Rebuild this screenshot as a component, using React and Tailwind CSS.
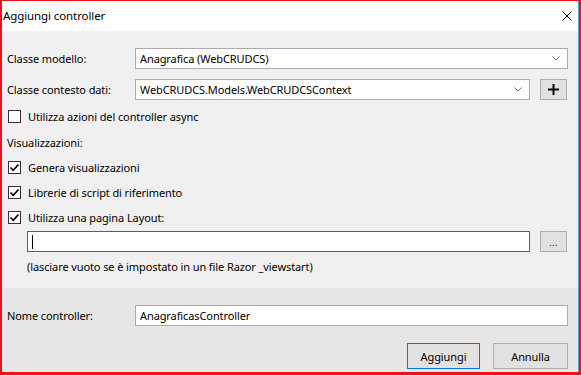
import React from 'react'

const font = { fontFamily: '"Noto Sans", "Open Sans", sans-serif' }

function Chevron() {
  return (
    <svg width="8" height="5" viewBox="0 0 8 5" className="shrink-0">
      <path d="M0.5 0.5 L4 4 L7.5 0.5" fill="none" stroke="#707070" strokeWidth="1" />
    </svg>
  )
}

function Combo({ value, className }) {
  return (
    <div className={`h-[21px] bg-white border border-[#acacac] flex items-center justify-between pl-[4px] pr-[7px] ${className}`}>
      <span>{value}</span>
      <Chevron />
    </div>
  )
}

function Check({ checked, label }) {
  return (
    <div className="flex items-center h-[25px]">
      <div className="w-[13px] h-[13px] border border-[#333] bg-white flex items-center justify-center mr-[7px]">
        {checked && (
          <svg width="11" height="11" viewBox="0 0 11 11">
            <path d="M1.5 5.5 L4.2 8.3 L9.5 2.5" fill="none" stroke="#000" strokeWidth="1.8" />
          </svg>
        )}
      </div>
      <span>{label}</span>
    </div>
  )
}

function GrayButton({ children, className }) {
  return (
    <div className={`bg-[#e1e1e1] border border-[#adadad] flex items-center justify-center ${className}`}>
      {children}
    </div>
  )
}

export default function App() {
  return (
    <div
      className="w-[581px] h-[375px] border-l-2 border-t border-r-2 border-b-[3px] border-[#e8141b] text-[11px] tracking-[-0.1px] text-black leading-none"
      style={font}
    >
      <div className="w-full h-full border-r border-[#5aa0e0] flex flex-col bg-[#f0f0f0]">
        {/* title bar */}
        <div className="h-[30px] bg-white flex items-center justify-between pl-[1px] pr-[6px] shrink-0">
          <span className="text-[11.5px]">Aggiungi controller</span>
          <svg width="10" height="10" viewBox="0 0 10 10">
            <path d="M0.5 0.5 L9.5 9.5 M9.5 0.5 L0.5 9.5" stroke="#000" strokeWidth="1" />
          </svg>
        </div>

        {/* body */}
        <div className="flex flex-col pl-[5px] pr-[10px] pt-[17px] h-[257px] shrink-0">
          <div className="flex items-center">
            <span className="w-[128px]">Classe modello:</span>
            <Combo value="Anagrafica (WebCRUDCS)" className="flex-1" />
          </div>
          <div className="flex items-center mt-[10px]">
            <span className="w-[128px]">Classe contesto dati:</span>
            <Combo value="WebCRUDCS.Models.WebCRUDCSContext" className="w-[395px]" />
            <GrayButton className="w-[27px] h-[21px] ml-[10px]">
              <svg width="11" height="11" viewBox="0 0 11 11">
                <path d="M5.5 0 V11 M0 5.5 H11" stroke="#000" strokeWidth="2" />
              </svg>
            </GrayButton>
          </div>
          <div className="mt-[4px] pl-[1px]">
            <Check checked={false} label="Utilizza azioni del controller async" />
          </div>
          <div className="h-[25px] flex items-center mt-[1px]">Visualizzazioni:</div>
          <div className="pl-[1px]">
            <Check checked label="Genera visualizzazioni" />
            <Check checked label="Librerie di script di riferimento" />
            <Check checked label="Utilizza una pagina Layout:" />
          </div>
          <div className="flex items-center pl-[20px] mt-[1px]">
            <div className="w-[503px] h-[21px] bg-white border border-[#0078d7] flex items-center pl-[4px]">
              <div className="w-[1px] h-[14px] bg-black" />
            </div>
            <GrayButton className="w-[27px] h-[21px] ml-[10px]">
              <span className="text-[9px] tracking-[0.5px] mt-[1px]">...</span>
            </GrayButton>
          </div>
          <div className="pl-[20px] mt-[9px]">(lasciare vuoto se è impostato in un file Razor _viewstart)</div>
        </div>

        {/* footer */}
        <div className="flex-1 bg-[#e6e6e6] flex flex-col pl-[5px] pr-[10px] pt-[17px]">
          <div className="flex items-center">
            <span className="w-[128px]">Nome controller:</span>
            <div className="flex-1 h-[21px] bg-white border border-[#acacac] flex items-center pl-[4px]">
              AnagraficasController
            </div>
          </div>
          <div className="flex justify-end mt-[17px]">
            <div className="w-[73px] h-[26px] bg-[#e1e1e1] border border-[#0078d7] flex items-center justify-center">
              Aggiungi
            </div>
            <GrayButton className="w-[75px] h-[26px] ml-[13px]">Annulla</GrayButton>
          </div>
        </div>
      </div>
    </div>
  )
}
